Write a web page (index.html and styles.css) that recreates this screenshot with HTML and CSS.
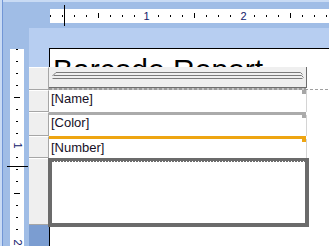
FILE: index.html
```html
<!DOCTYPE html>
<html lang="en">
<head>
    <meta charset="UTF-8">
    <meta name="viewport" content="width=device-width, initial-scale=1.0">
    <title>Barcode Report - Design</title>
    <link rel="stylesheet" href="styles.css">
</head>
<body>
    <div class="designer">
        <div class="hruler-row">
            <div class="hruler">
                <span class="num">1</span>
                <span class="num">2</span>
            </div>
        </div>
        <div class="work">
            <div class="side">
                <div class="vruler">
                    <span class="vnum">1</span>
                    <span class="vnum">2</span>
                </div>
            </div>
            <div class="canvas">
                <div class="page">
                    <div class="title">Barcode Report</div>
                    <div class="margin-guide"></div>
                </div>
                <div class="bands">
                    <div class="gutter">
                        <div class="cell h23"></div>
                        <div class="cell h22"></div>
                        <div class="cell h24"></div>
                        <div class="cell h22"></div>
                        <div class="cell h67"></div>
                        <div class="gutter-fill"></div>
                    </div>
                    <div class="stack">
                        <div class="band-head">
                            <svg width="256" height="20" viewBox="0 0 256 20">
                                <g stroke="#7a7a7a" stroke-width="1" fill="none">
                                    <path d="M7 5.5H251.5L253.5 7.5"/>
                                    <path d="M5 8.5H252.5L254.5 10.5"/>
                                    <path d="M3.5 11.5H253.5"/>
                                    <path d="M7 5.5L3.5 9"/>
                                </g>
                            </svg>
                        </div>
                        <div class="bar dashed"></div>
                        <div class="field f-name">[Name]</div>
                        <div class="bar grey"></div>
                        <div class="field f-color">[Color]</div>
                        <div class="bar orange"></div>
                        <div class="field f-number">[Number]</div>
                        <div class="detail">
                            <div class="detail-dash"></div>
                        </div>
                    </div>
                </div>
            </div>
        </div>
        <div class="cursor-x"></div>
        <div class="cursor-y"></div>
    </div>
</body>
</html>
```

FILE: styles.css
```css
body {
    margin: 0;
    font-family: "Liberation Sans", Arial, sans-serif;
}
.designer {
    position: relative;
    width: 329px;
    height: 246px;
    overflow: hidden;
    display: flex;
    flex-direction: column;
    background:
        linear-gradient(to right, #c9dbf4 0 2px, #7196d6 2px 3px, transparent 3px),
        linear-gradient(to bottom, #c9dbf4 0 2px, transparent 2px),
        #a0bde6;
}

/* top ruler */
.hruler-row {
    height: 28px;
    padding: 9px 0 0 50px;
    box-sizing: border-box;
    flex: none;
}
.hruler {
    height: 14px;
    display: flex;
    align-items: center;
    gap: 90px;
    padding-left: 93px;
    background:
        linear-gradient(90deg, #000 1px, transparent 1px) 48px 4px / 96px 5px repeat-x,
        linear-gradient(90deg, #000 1px, transparent 1px) 12px 6px / 12px 2px repeat-x,
        #fff;
}
.num {
    width: 7px;
    height: 10px;
    line-height: 10px;
    font-size: 11px;
    text-align: center;
    color: #12206a;
    background: #fff;
}

/* left side + vertical ruler */
.work {
    flex: 1;
    display: flex;
}
.side {
    width: 29px;
    flex: none;
    display: flex;
}
.vruler {
    width: 14px;
    margin: 21px 0 0 10px;
    display: flex;
    flex-direction: column;
    align-items: center;
    gap: 90px;
    padding-top: 93px;
    box-sizing: border-box;
    background:
        linear-gradient(#000 1px, transparent 1px) 4px 48px / 6px 96px repeat-y,
        linear-gradient(#000 1px, transparent 1px) 6px 12px / 2px 12px repeat-y,
        #fff;
}
.vnum {
    width: 10px;
    height: 7px;
    line-height: 7px;
    font-size: 11px;
    text-align: center;
    color: #12206a;
    background: #fff;
    transform: rotate(90deg);
}

/* design surface */
.canvas {
    position: relative;
    flex: 1;
    padding: 20px 0 0 20px;
    background: #b7cef1;
}
.page {
    height: 100%;
    background: #fff;
    border-left: 1px solid #000;
    border-top: 1px solid #000;
}
.title {
    height: 40px;
    overflow: hidden;
    white-space: nowrap;
    box-sizing: border-box;
    padding: 6px 0 0 3px;
    font-size: 30px;
    line-height: 30px;
    color: #000;
}
.margin-guide {
    height: 1px;
    background: repeating-linear-gradient(90deg, #a0a0a0 0 3px, transparent 3px 5px);
}

/* band list laid over the page */
.bands {
    position: absolute;
    left: 0;
    top: 39px;
    bottom: 0;
    display: flex;
}
.gutter {
    width: 20px;
    display: flex;
    flex-direction: column;
}
.gutter .cell {
    background: #efefef;
    border-top: 1px solid #fff;
    border-bottom: 1px solid #a6a6a6;
    border-right: 1px solid #a6a6a6;
    box-sizing: border-box;
}
.h22 { height: 22px; }
.h23 { height: 23px; }
.h24 { height: 24px; }
.h67 { height: 67px; }
.gutter-fill {
    flex: 1;
    background: #7b9dd1;
}
.stack {
    width: 260px;
    display: flex;
    flex-direction: column;
}
.band-head {
    width: 258px;
    height: 21px;
    box-sizing: border-box;
    background: #efefef;
    border-right: 1px solid #6e6e6e;
    border-bottom: 1px solid #6e6e6e;
}
.band-head svg {
    display: block;
}
.bar {
    position: relative;
    width: 257px;
    flex: none;
}
.bar::after {
    content: '';
    position: absolute;
    right: 0;
    top: 100%;
    width: 4px;
    height: 3px;
    background: #ababab;
}
.bar.dashed {
    height: 2px;
    background: repeating-linear-gradient(90deg, #9c9c9c 0 3px, #c4c4c4 3px 5px);
}
.bar.dashed::after {
    height: 4px;
    background: #a6a6a6;
}
.bar.grey {
    height: 3px;
    background: #ababab;
}
.bar.orange {
    height: 3px;
    background: #eea512;
}
.bar.orange::after {
    background: #eea512;
}
.field {
    width: 258px;
    box-sizing: border-box;
    background: #fff;
    border-right: 1px solid #d4d4d4;
    padding-left: 2px;
    font-size: 13px;
    line-height: 15px;
    color: #160f26;
    flex: none;
}
.f-name { height: 22px; padding-top: 1px; }
.f-color { height: 21px; }
.f-number { height: 19px; padding-top: 1px; }
.detail {
    margin-left: -1px;
    width: 261px;
    height: 69px;
    box-sizing: border-box;
    border: 4px solid #6b6b6b;
    border-top-width: 3px;
    background: #fff;
}
.detail-dash {
    height: 1px;
    background: repeating-linear-gradient(90deg, #6b6b6b 0 2px, #fff 2px 3px);
}

/* mouse position markers on the rulers */
.cursor-x {
    position: absolute;
    left: 64px;
    top: 5px;
    width: 1px;
    height: 21px;
    background: #000;
}
.cursor-y {
    position: absolute;
    left: 7px;
    top: 166px;
    width: 21px;
    height: 1px;
    background: #000;
}
```
